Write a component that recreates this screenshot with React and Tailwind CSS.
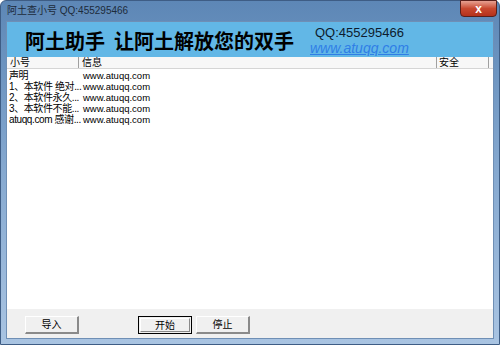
import React from "react";

const rows = [
  ["声明", "www.atuqq.com"],
  ["1、本软件 绝对...", "www.atuqq.com"],
  ["2、本软件永久...", "www.atuqq.com"],
  ["3、本软件不能...", "www.atuqq.com"],
  ["atuqq.com 感谢...", "www.atuqq.com"],
];

const font = { fontFamily: '"Liberation Sans", "Noto Sans CJK SC", sans-serif' };

export default function App() {
  return (
    <div className="w-[500px] h-[345px] overflow-hidden bg-[#fff]" style={font}>
      <div className="w-[500px] h-[345px] flex flex-col bg-gradient-to-b from-[#5d87b6] via-[#86a9d0] to-[#a9c4e2] border border-[#3e5d85] rounded-t-[6px]">
        {/* title bar */}
        <div className="h-[20px] flex items-start justify-between pl-[6px] pr-[2px]">
          <div className="pt-[3px] text-[10px] leading-[14px] text-[#1d2b3b]">阿土查小号 QQ:455295466</div>
          <div className="w-[37px] h-[17px] mt-[-1px] rounded-b-[4px] border border-[#5a1f1a] bg-gradient-to-b from-[#e6a091] via-[#c8482f] to-[#b5311b] flex items-center justify-center">
            <span className="text-white text-[12px] font-bold leading-none">x</span>
          </div>
        </div>
        {/* client area */}
        <div className="flex-1 mx-[5px] mb-[5px] border border-[#6f8fb5] bg-[#f0f0f0] flex flex-col">
          {/* header band */}
          <div className="h-[35px] bg-[#62b7e6] flex items-start">
            <div className="w-[303px] shrink-0 pl-[18px] pt-[7px] text-[20px] font-bold leading-[24px] text-black" style={{ fontFamily: '"Noto Sans CJK SC", sans-serif' }}>
              阿土助手&nbsp;&nbsp;让阿土解放您的双手
            </div>
            <div className="flex flex-col items-start">
              <div className="pl-[5px] pt-[4px] text-[13px] leading-[14px] text-[#0d1c2e]">QQ:455295466</div>
              <div className="text-[14px] leading-[16px] italic underline text-[#2f7ee6]">www.atuqq.com</div>
            </div>
          </div>
          {/* list */}
          <div className="h-[252px] bg-white flex flex-col">
            <div className="h-[12px] flex text-[10px] leading-[11px] text-black bg-[#f7f7f7] border-b border-[#d5d5d5]">
              <div className="w-[72px] pl-[3px] border-r border-[#a0a0a0]">小号</div>
              <div className="w-[358px] pl-[3px] border-r border-[#a0a0a0]">信息</div>
              <div className="w-[52px] pl-[2px] border-r border-[#a0a0a0]">安全</div>
              <div className="flex-1" />
            </div>
            <div className="pt-[1px]">
              {rows.map(([a, b], i) => (
                <div key={i} className="h-[11px] flex text-[10px] leading-[11px] text-black">
                  <div className="w-[73px] pl-[2px] whitespace-nowrap tracking-[-0.4px]">{a}</div>
                  <div className="pl-[3px] text-[9.5px]">{b}</div>
                </div>
              ))}
            </div>
          </div>
          {/* bottom */}
          <div className="flex-1 flex items-start pt-[7px] text-[10px]">
            <div className="ml-[18px] w-[54px] h-[18px] bg-[#f0f0f0] border-t border-l border-white border-r-2 border-b-2 border-r-[#8a8a8a] border-b-[#8a8a8a] flex items-center justify-center">导入</div>
            <div className="ml-[59px] w-[54px] h-[18px] border border-black p-px">
              <div className="w-full h-full border-t border-l border-white border-r border-b border-r-[#8a8a8a] border-b-[#8a8a8a] flex items-center justify-center">开始</div>
            </div>
            <div className="ml-[4px] w-[54px] h-[18px] bg-[#f0f0f0] border-t border-l border-white border-r-2 border-b-2 border-r-[#8a8a8a] border-b-[#8a8a8a] flex items-center justify-center">停止</div>
          </div>
        </div>
      </div>
    </div>
  );
}
